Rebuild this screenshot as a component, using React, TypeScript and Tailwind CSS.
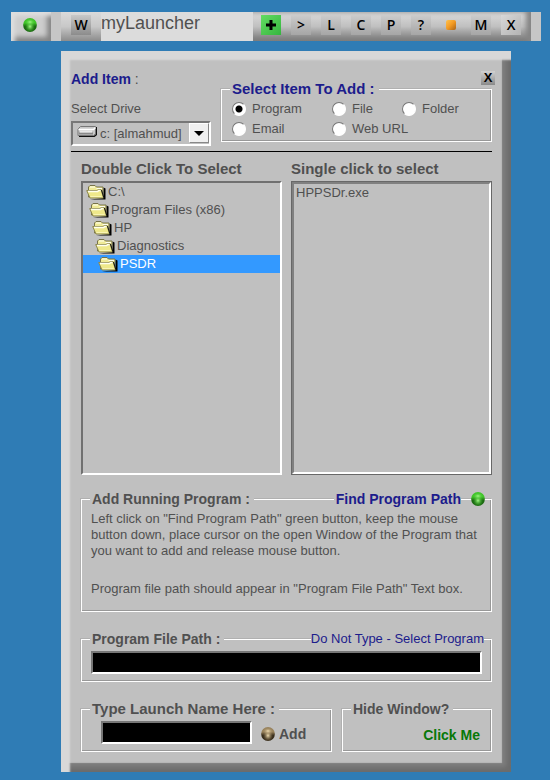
import { useState } from 'react';
import type { ReactNode } from 'react';
import clsx from 'clsx';

const folders = [
  { name: 'C:\\', indent: 'pl-[3px]' },
  { name: 'Program Files (x86)', indent: 'pl-[6px]' },
  { name: 'HP', indent: 'pl-[9px]' },
  { name: 'Diagnostics', indent: 'pl-[12px]' },
  { name: 'PSDR', indent: 'pl-[15px]' },
];

const itemTypes = ['Program', 'File', 'Folder', 'Email', 'Web URL'];

function Ball({ id, light, mid, dark }: { id: string; light: string; mid: string; dark: string }) {
  return (
    <svg viewBox="0 0 14 14" className="block size-[14px]" aria-hidden="true">
      <defs>
        <linearGradient id={id} x1="0" y1="0" x2="0" y2="1">
          <stop offset="0" stopColor={mid} />
          <stop offset="0.35" stopColor={mid} />
          <stop offset="0.6" stopColor={dark} />
          <stop offset="1" stopColor={dark} />
        </linearGradient>
        <radialGradient id={`${id}-glow`}>
          <stop offset="0" stopColor={light} />
          <stop offset="1" stopColor={mid} stopOpacity="0" />
        </radialGradient>
      </defs>
      <circle cx="7" cy="7" r="6.900" fill={`url(#${id})`} />
      <ellipse cx="7" cy="8.500" rx="5" ry="5.500" fill={`url(#${id}-glow)`} />
      <ellipse cx="7" cy="4" rx="5.500" ry="3.500" fill={`url(#${id}-glow)`} />
    </svg>
  );
}

function FolderIcon() {
  return (
    <svg viewBox="0 0 20 16" className="h-[16px] w-[20px] shrink-0" aria-hidden="true">
      <path d="M4 15.500h15.500V4.500l-2-1V14z" fill="#000" />
      <path d="M2.500 13V3l1.500-1.500h5L10.500 3H17v10z" fill="#efea96" stroke="#77734a" />
      <path d="M4 3h5M10.500 4.500H16" stroke="#fffff0" />
      <path d="M.700 6.500h10.300l1.500-1H15l2.500 8.500H4z" fill="#eee88a" stroke="#8d8850" />
      <path d="M2 7.500h9.500l1.500-1h1.500" fill="none" stroke="#fffff0" strokeWidth="1.500" />
      <path d="M4.500 12.500h11" stroke="#f8f4b4" />
      <path d="m15.500 6 2.500 8" stroke="#111" />
    </svg>
  );
}

function DriveIcon() {
  return (
    <svg viewBox="0 0 20 11" className="h-[11px] w-[20px]" aria-hidden="true">
      <path d="M2 10.500h15l2.500-2V1" fill="none" stroke="#111" strokeWidth="1.500" />
      <path d="m1 3 2.500-2.500H18.500v7.500L16.500 9.500H1z" fill="#c8c8c8" stroke="#777" />
      <path d="M1.500 3.500h15l2-2" fill="none" stroke="#fff" strokeWidth="1.500" />
      <path d="M2 7.500h14" stroke="#8a8a8a" strokeWidth="2" />
      <path d="M3 5.500h12" stroke="#e8e8e8" strokeWidth="2" />
    </svg>
  );
}

function ToolButton({ label, className, children }: { label: string; className?: string; children: ReactNode }) {
  return (
    <button
      aria-label={label}
      className={clsx(
        'flex size-5 shrink-0 items-center justify-center font-["Open_Sans",sans-serif] text-[14px] leading-5 font-semibold text-black',
        className ?? 'bg-linear-to-b from-[#cccccc] to-[#a6a6a6]'
      )}
    >
      {children}
    </button>
  );
}

function Toolbar() {
  return (
    <header className="mr-[9px] ml-[11px] flex h-[29px] bg-[#c6c6c6]">
      <div className="flex w-10 items-center justify-center bg-[#cdcdcd] pr-[2px] pb-[3px] shadow-[inset_4px_4px_4px_#dedede,inset_-4px_-4px_5px_#858585]">
        <button aria-label="Status">
          <Ball id="status" light="#a4f888" mid="#3fc428" dark="#1c6a12" />
        </button>
      </div>
      <div className="ml-[10px] flex w-10 items-start bg-linear-to-b from-[#dadada] via-[#c8c8c8] to-[#8c8c8c] pt-[3px] pl-[10px]">
        <ToolButton label="Window" className="bg-linear-to-b from-[#c8c8c8] to-[#8c8c8c]">
          W
        </ToolButton>
      </div>
      <input
        aria-label="Launch name"
        defaultValue="myLauncher"
        className="min-w-0 flex-1 bg-[#dcdcdc] pb-[8px] text-[18px] leading-5 text-[#505050] outline-none"
      />
      <nav className="flex items-start gap-[10px] bg-linear-to-b from-[#dcdcdc] via-[#c0c0c0] to-[#777] pt-[3px] pr-[10px] pl-[8px] shadow-[inset_-5px_0_5px_#858585]">
        <ToolButton label="Add" className="bg-linear-to-br from-[#62dc62] to-[#35b53f]">
          <svg viewBox="0 0 12 12" className="size-3" aria-hidden="true">
            <path d="M6 1v10M1 6h10" stroke="#000" strokeWidth="3" />
          </svg>
        </ToolButton>
        <ToolButton label="Next">&gt;</ToolButton>
        <ToolButton label="L">L</ToolButton>
        <ToolButton label="C">C</ToolButton>
        <ToolButton label="P">P</ToolButton>
        <ToolButton label="Help">?</ToolButton>
        <ToolButton label="Colour" className="bg-transparent">
          <span className="size-[10px] rounded-[2px] bg-linear-to-br from-[#ffc34d] via-[#f39a22] to-[#a8641a]" />
        </ToolButton>
        <ToolButton label="M">M</ToolButton>
        <ToolButton label="Exit" className="bg-linear-to-br from-[#d8d8d8] to-[#b4b4b4]">
          X
        </ToolButton>
      </nav>
      <div className="w-[10px]" />
    </header>
  );
}

type GroupProps = { title: string; className?: string; titleClass?: string; children: ReactNode };

function Group({ title, className, titleClass, children }: GroupProps) {
  return (
    <fieldset
      className={clsx(
        'relative min-w-0 border border-white shadow-[inset_-1px_-1px_0_#989898,-1px_-1px_0_#b0b0b0]',
        className
      )}
    >
      <legend className={clsx('ml-2 bg-[#c0c0c0] pr-1 pl-[2px] leading-5 font-bold', titleClass ?? 'text-[14px]')}>
        {title}
      </legend>
      {children}
    </fieldset>
  );
}

export default function App() {
  const [type, setType] = useState('Program');
  const [selected, setSelected] = useState('PSDR');

  return (
    <div className='min-h-screen bg-[#2f7cb5] pt-[12px] pb-2 font-["Liberation_Sans",Arial,sans-serif] text-[13px] leading-4 text-[#505050]'>
      <Toolbar />

      <main className="relative mt-[10px] mr-[39px] ml-[61px] bg-[#c0c0c0] pt-[18px] pr-[19px] pb-5 pl-[10px] shadow-[inset_9px_9px_2px_#d8d8d8,inset_-5px_-5px_5px_#6c6c6c,inset_-9px_-9px_1px_#808080]">
        <button
          aria-label="Close"
          className="absolute top-[20px] right-4 size-[14px] bg-linear-to-b from-[#d2d2d2] to-[#8a8a8a] text-[13px] leading-[14px] font-bold text-black"
        >
          X
        </button>

        <div className="flex items-end gap-[10px] border-b border-black pb-[9px]">
          <div className="flex w-[140px] flex-col">
            <h1 className="mb-[12px] text-[14px] leading-5">
              <b className="text-[#1c1c8c]">Add Item</b> :
            </h1>
            <label htmlFor="drive" className="mb-1 leading-4">
              Select Drive
            </label>
            <div className="relative -mb-1">
              <select
                id="drive"
                className="block h-[25px] w-full appearance-none border-2 border-t-[#777] border-r-white border-b-white border-l-[#777] bg-[#c0c0c0] pl-[27px] text-[13px] outline-none"
              >
                <option>c: [almahmud]</option>
              </select>
              <span className="pointer-events-none absolute top-[5px] left-[6px]">
                <DriveIcon />
              </span>
              <span className="pointer-events-none absolute top-[2px] right-[2px] flex h-[20px] w-[20px] items-center justify-center border border-t-white border-r-[#888] border-b-[#888] border-l-white bg-[#f0f0f0]">
                <svg viewBox="0 0 10 5" className="h-[5px] w-[10px]" aria-hidden="true">
                  <path d="M0 0h10L5 5z" fill="#000" />
                </svg>
              </span>
            </div>
          </div>

          <Group title="Select Item To Add :" className="flex-1 pb-[2px]" titleClass="text-[15px] text-[#1c1c8c]">
            <div className="grid grid-cols-[100px_70px_1fr] pl-[10px]">
              {itemTypes.map((t) => (
                <label
                  key={t}
                  className={clsx('flex h-5 items-center gap-[6px] whitespace-nowrap', t === 'Web URL' && 'col-span-2')}
                >
                  <input
                    type="radio"
                    name="item-type"
                    checked={type === t}
                    onChange={() => setType(t)}
                    className="size-[14px] shrink-0 appearance-none rounded-full border border-t-[#777] border-r-white border-b-white border-l-[#777] bg-white checked:bg-[radial-gradient(circle,#000_3px,#fff_4px)]"
                  />
                  {t}
                </label>
              ))}
            </div>
          </Group>
        </div>

        <div className="mt-[7px] ml-[10px] grid grid-cols-2 gap-[9px]">
          <section>
            <h2 className="mb-[2px] text-[15px] leading-5 font-bold">Double Click To Select</h2>
            <ul className="h-[294px] border-2 border-t-[#707070] border-r-white border-b-white border-l-[#707070]">
              {folders.map((f) => (
                <li key={f.name}>
                  <button
                    onClick={() => setSelected(f.name)}
                    className={clsx(
                      'flex h-[18px] w-full items-center gap-[2px] text-left',
                      f.indent,
                      selected === f.name && 'bg-[#3399ff] text-white'
                    )}
                  >
                    <FolderIcon />
                    {f.name}
                  </button>
                </li>
              ))}
            </ul>
          </section>
          <section>
            <h2 className="mb-[2px] text-[15px] leading-5 font-bold">Single click to select</h2>
            <div className="h-[294px] border border-[#686868]">
              <ul className="h-full border-2 border-t-[#808080] border-r-white border-b-white border-l-[#808080] pl-[2px]">
                <li>
                  <button className="h-[18px]">HPPSDr.exe</button>
                </li>
              </ul>
            </div>
          </section>
        </div>

        <div className="ml-[10px]">
          <Group title="Add Running Program :" className="mt-[14px] h-[123px]">
            <button className="absolute -top-5 right-[6px] flex h-5 items-center text-[14px] font-bold text-[#1c1c8c]">
              <span className="bg-[#c0c0c0] pl-[2px] leading-4">Find Program Path</span>
              <span className="ml-[10px]">
                <Ball id="find" light="#a4f888" mid="#3fc428" dark="#1c6a12" />
              </span>
            </button>
            <p className="mt-[2px] pr-[6px] pl-[9px]">
              Left click on "Find Program Path" green button, keep the mouse button down, place cursor on the open Window of the
              Program that you want to add and release mouse button.
            </p>
            <p className="mt-[22px] pl-[9px] whitespace-nowrap">
              Program file path should appear in "Program File Path" Text box.
            </p>
          </Group>

          <Group title="Program File Path :" className="mt-[17px] pb-[7px]">
            <span className="absolute -top-[18px] right-[7px] bg-[#c0c0c0] leading-4 text-[#1c1c8c]">
              Do Not Type - Select Program
            </span>
            <div className="mt-[2px] px-[9px]">
              <input
                aria-label="Program file path"
                className="block h-[23px] w-full border-2 border-t-[#777] border-r-white border-b-white border-l-[#777] bg-black px-1 text-white outline-none"
              />
            </div>
          </Group>

          <div className="mt-[17px] flex gap-[10px]">
            <Group title="Type Launch Name Here :" className="flex-1 pb-[7px]" titleClass="text-[15px]">
              <div className="mt-[2px] flex items-center pl-[19px]">
                <input
                  aria-label="Type launch name here"
                  className="h-[23px] w-[151px] border-2 border-t-[#777] border-r-white border-b-white border-l-[#777] bg-black px-1 text-white outline-none"
                />
                <button className="mt-[3px] ml-[9px] flex items-center gap-1 text-[14px] font-bold">
                  <Ball id="add" light="#f2dfb4" mid="#98825c" dark="#392e1c" />
                  Add
                </button>
              </div>
            </Group>
            <Group title="Hide Window?" className="w-[150px]">
              <button className="mt-[8px] mr-[11px] ml-auto block text-[14px] font-bold text-[#087808]">Click Me</button>
            </Group>
          </div>
        </div>
      </main>
    </div>
  );
}
